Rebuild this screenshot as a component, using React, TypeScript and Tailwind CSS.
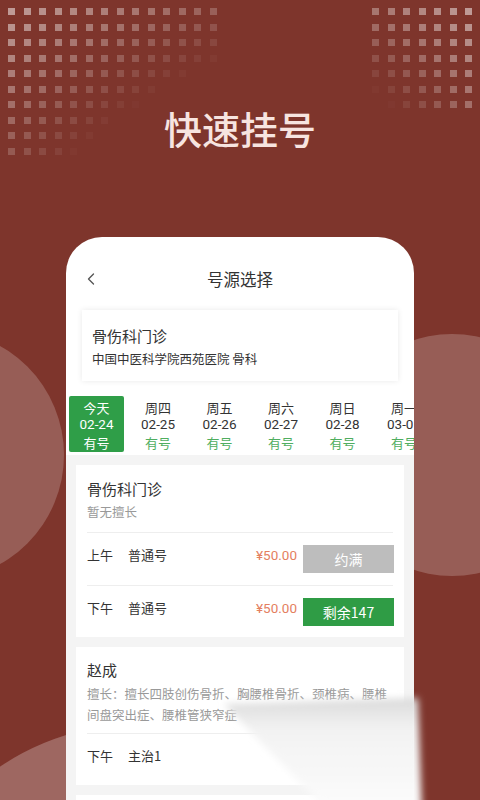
import { ChevronLeft } from 'lucide-react';

type Day = {
  week: string;
  date: string;
  active?: boolean;
};

const days: Day[] = [
  { week: '今天', date: '02-24', active: true },
  { week: '周四', date: '02-25' },
  { week: '周五', date: '02-26' },
  { week: '周六', date: '02-27' },
  { week: '周日', date: '02-28' },
  { week: '周一', date: '03-01' },
];

const leftDots = Array.from({ length: 10 * 14 }, (_, i) => {
  const row = Math.floor(i / 14);
  const col = i % 14;
  return { row, col, opacity: Math.max(0, 0.5 - col * 0.022 - row * 0.035 - col * row * 0.002) };
});

const rightDots = Array.from({ length: 7 * 7 }, (_, i) => {
  const row = Math.floor(i / 7);
  const col = i % 7;
  const fromRight = 6 - col;
  return { row, col, opacity: Math.max(0, 0.5 - fromRight * 0.03 - row * 0.035 - fromRight * row * 0.004) };
});

const Slot = ({ time, kind, price, label, full }: { time: string; kind: string; price: string; label: string; full?: boolean }) => (
  <div className="flex h-[53px] items-center border-t border-[#eeeeee]">
    <span className="mb-[8px] text-[13px] leading-5 text-[#333]">{time}</span>
    <span className="mb-[8px] ml-[15px] text-[13px] leading-5 text-[#333]">{kind}</span>
    <span className="mb-[8px] ml-auto font-['Roboto',sans-serif] text-[13.5px] leading-5 text-[#e4805f]">{price}</span>
    <div
      className={`ml-[6px] mr-[-1px] flex h-[28px] w-[91px] items-center justify-center text-[14px] text-white ${
        full ? 'bg-[#bdbdbd]' : 'bg-[#2f9c45]'
      }`}
    >
      {label}
    </div>
  </div>
);

export default function App() {
  return (
    <div className="relative h-[800px] w-[480px] overflow-hidden bg-[#7e352c] font-['Noto_Sans_CJK_SC',sans-serif]">
      {/* background decoration */}
      <div className="absolute left-[8px] top-[8px] grid grid-cols-[repeat(14,7px)] gap-[8.5px]">
        {leftDots.map((d) => (
          <div key={`l${d.row}-${d.col}`} className="h-[7px] w-[7px] bg-white" style={{ opacity: d.opacity }} />
        ))}
      </div>
      <div className="absolute left-[372px] top-[8px] grid grid-cols-[repeat(7,7px)] gap-[8.5px]">
        {rightDots.map((d) => (
          <div key={`r${d.row}-${d.col}`} className="h-[7px] w-[7px] bg-white" style={{ opacity: d.opacity }} />
        ))}
      </div>
      <div className="absolute left-[-186px] top-[330px] h-[250px] w-[250px] rounded-full bg-white/20" />
      <div className="absolute left-[331px] top-[334px] h-[242px] w-[242px] rounded-full bg-white/20" />
      <div className="absolute left-[-111px] top-[724px] h-[502px] w-[502px] rounded-full bg-white/25" />

      <div className="relative z-10">
        <h1 className="pt-[104px] text-center text-[38px] font-medium leading-[48px] text-[#f7e4e0]">
          快速挂号
        </h1>

        <div className="ml-[66px] mt-[85px] h-[563px] w-[348px] overflow-hidden rounded-t-[36px] bg-white">
          {/* header */}
          <div className="h-[73px] pt-[30px]">
            <div className="relative flex h-6 items-center justify-center">
              <ChevronLeft className="absolute left-[15px] h-[20px] w-[20px] text-[#555]" strokeWidth={1.6} />
              <span className="text-[16.5px] text-[#333]">号源选择</span>
            </div>
          </div>

          {/* department */}
          <div className="mx-[16px] h-[71px] pl-[10px] pt-[16px] shadow-[0_0_6px_rgba(0,0,0,0.09)]">
            <div className="text-[15px] leading-5 text-[#333]">骨伤科门诊</div>
            <div className="mt-[4px] text-[12.5px] leading-[18px] text-[#333]">中国中医科学院西苑医院 骨科</div>
          </div>

          {/* dates */}
          <div className="mt-[15px] flex gap-[6.5px] pl-[3px]">
            {days.map((d) => (
              <div
                key={d.date}
                className={`flex h-[56px] w-[55px] shrink-0 flex-col items-center justify-center rounded-[2px] pt-[2px] text-[13px] leading-[17.5px] ${
                  d.active ? 'bg-[#2f9e48] text-white' : 'text-[#333]'
                }`}
              >
                <span>{d.week}</span>
                <span className="font-['Roboto',sans-serif] text-[13.5px]">{d.date}</span>
                <span className={d.active ? 'text-white' : 'text-[#4fae5f]'}>有号</span>
              </div>
            ))}
          </div>

          {/* schedule list */}
          <div className="mt-[3px] flex h-full flex-col gap-[10px] bg-[#f4f4f4] px-[10px] pt-[10px]">
            <div className="h-[172px] bg-white px-[11px]">
              <div className="pt-[14px] text-[15px] leading-5 text-[#333]">骨伤科门诊</div>
              <div className="mt-[4px] pb-[11px] text-[12.5px] leading-[18px] text-[#999]">暂无擅长</div>
              <Slot time="上午" kind="普通号" price="¥50.00" label="约满" full />
              <Slot time="下午" kind="普通号" price="¥50.00" label="剩余147" />
            </div>

            <div className="h-[138px] bg-white px-[11px]">
              <div className="pt-[13px] text-[15px] leading-5 text-[#333]">赵成</div>
              <div className="mt-[2.5px] pb-[8.5px] text-[12.5px] leading-[21px] text-[#999]">
                擅长：擅长四肢创伤骨折、胸腰椎骨折、颈椎病、腰椎间盘突出症、腰椎管狭窄症
              </div>
              <div className="flex h-[52px] items-center border-t border-[#eeeeee]">
                <span className="mb-[8px] text-[13px] leading-5 text-[#333]">下午</span>
                <span className="mb-[8px] ml-[15px] text-[13px] leading-5 text-[#333]">主治1</span>
              </div>
            </div>

            <div className="h-[100px] bg-white" />
          </div>
        </div>
      </div>

      {/* white smear over the bottom of the screen */}
      <svg className="absolute left-[200px] top-[680px] z-20" width="280" height="140" viewBox="0 0 280 140">
        <defs>
          <filter id="smear" x="-20%" y="-20%" width="140%" height="140%">
            <feGaussianBlur stdDeviation="3.5" />
          </filter>
          <linearGradient id="smearFill" x1="0" y1="0" x2="0" y2="1">
            <stop offset="0" stopColor="#dadada" />
            <stop offset="0.25" stopColor="#f2f2f2" />
            <stop offset="1" stopColor="#fdfdfd" />
          </linearGradient>
        </defs>
        <polygon points="24,24 218,18 222,140 136,140" fill="url(#smearFill)" filter="url(#smear)" />
      </svg>
    </div>
  );
}
